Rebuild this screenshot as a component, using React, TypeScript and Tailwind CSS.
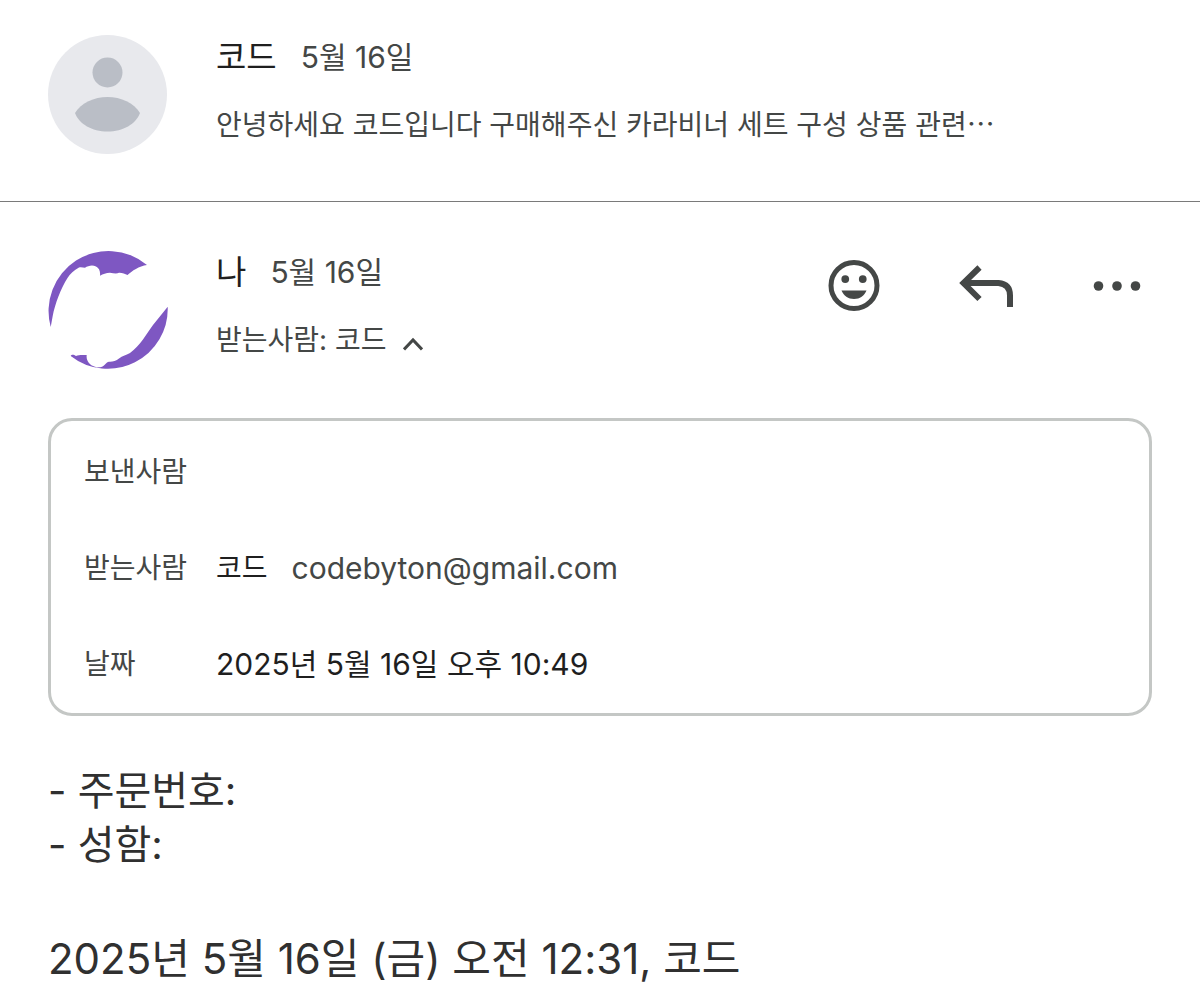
import type { ReactNode } from "react";

function PersonAvatar() {
  return (
    <svg viewBox="0 0 120 120" className="size-30 shrink-0" aria-hidden="true">
      <circle cx="59.500" cy="59.500" r="59.500" fill="#e8e9ed" />
      <circle cx="59.500" cy="37.500" r="15" fill="#babec6" />
      <path d="M27 78c6-10 19-16 32.500-16S86 68 92 78c-4 11-17 18.500-32.500 18.500S31 89 27 78z" fill="#babec6" />
    </svg>
  );
}

function MyAvatar() {
  return (
    <svg viewBox="0 0 120 120" className="size-30 shrink-0" fill="#7e57c2" aria-hidden="true">
      <path d="M2.700 77A60 60 0 0 1 99 15C91 16 84 21 79.500 25 77 24 74 22.500 71 22.700 69 24 66 23.500 62 22.700 58 23 55 24 52 25.700 52.500 21 51 18 48 16.500 44 14.500 40 16 37 17.700 35 17.500 33 17 31 17.500 26 20 22 24 19.500 28 13 38 7 54 4.700 66z" />
      <path d="M119.700 56.700A60 60 0 0 1 22.700 106C24 104 26 105 28 106 31 104.500 35 105 38.700 105 38 110 41 115 47 116.700 49 117.500 52 117.500 54 116.700 57 115.500 58 112 61 111.700 64 112 68 111 71 108.500 74 106 79 105 82 103 92 96 99 83 105 75z" />
    </svg>
  );
}

function SmileIcon() {
  return (
    <svg viewBox="0 0 24 24" className="size-15" fill="#444746" aria-hidden="true">
      <circle cx="12" cy="11.800" r="9.200" fill="none" stroke="#444746" strokeWidth="2" />
      <circle cx="8.500" cy="9.200" r="1.550" />
      <circle cx="15.500" cy="9.200" r="1.550" />
      <path d="M7 13.800h10c-.8 2.100-2.700 3.400-5 3.400s-4.200-1.300-5-3.400z" />
    </svg>
  );
}

function ReplyIcon() {
  return (
    <svg viewBox="0 0 60 60" className="size-15" fill="none" stroke="#444746" strokeWidth="6" aria-hidden="true">
      <path d="M23.500 11.500 7.500 27l16 16M8 27h34.500Q54 28 54 39.500v11.500" />
    </svg>
  );
}

function MoreIcon() {
  return (
    <svg viewBox="0 0 60 60" className="size-15" fill="#444746" aria-hidden="true">
      <circle cx="10.500" cy="30" r="4.800" />
      <circle cx="29" cy="30" r="4.800" />
      <circle cx="47.500" cy="30" r="4.800" />
    </svg>
  );
}

function ChevronUp() {
  return (
    <svg viewBox="0 0 20 20" className="mt-2 size-5" fill="none" stroke="#444746" strokeWidth="3" aria-hidden="true">
      <path d="M1 15.500 10 6l9 9.500" />
    </svg>
  );
}

function Sender({ name, date }: { name: string; date: string }) {
  return (
    <div className="flex items-center gap-6 leading-10">
      <span className="text-[33px] text-[#1f1f1f]">{name}</span>
      <span className="text-[30px] text-[#444746]">{date}</span>
    </div>
  );
}

function DetailRow({ label, children }: { label: string; children?: ReactNode }) {
  return (
    <div className="flex h-24 items-center">
      <dt className="w-33 shrink-0 text-[#444746]">{label}</dt>
      <dd className="flex items-center gap-6 text-[#1f1f1f]">{children}</dd>
    </div>
  );
}

export default function App() {
  return (
    <main className="bg-white font-['Inter','Noto_Sans_CJK_KR',sans-serif] text-[28px] leading-10 text-[#444746]">
      {/* Collapsed message */}
      <article className="flex gap-12 border-b border-[#7a7a7a] px-12 pt-[35px] pb-[46px]">
        <PersonAvatar />
        <div className="min-w-0 pt-0.5">
          <Sender name="코드" date="5월 16일" />
          <p className="mt-7 truncate">안녕하세요 코드입니다 구매해주신 카라비너 세트 구성 상품 관련⋯</p>
        </div>
      </article>

      {/* Open message */}
      <article className="px-12 pt-12">
        <header className="flex gap-12">
          <MyAvatar />
          <div className="flex-1 pt-0.5">
            <Sender name="나" date="5월 16일" />
            <button type="button" aria-expanded="true" className="mt-7 flex items-center gap-4">
              받는사람: 코드
              <ChevronUp />
            </button>
          </div>
          <div className="flex gap-18 pt-[6px] pr-1">
            <button type="button" aria-label="반응 추가" className="size-15">
              <SmileIcon />
            </button>
            <button type="button" aria-label="답장" className="size-15">
              <ReplyIcon />
            </button>
            <button type="button" aria-label="더보기" className="size-15">
              <MoreIcon />
            </button>
          </div>
        </header>

        <dl className="mt-12 rounded-3xl border-3 border-[#c4c7c5] px-[33px] pt-[3px] pb-px">
          <DetailRow label="보낸사람" />
          <DetailRow label="받는사람">
            <span>코드</span>
            <a href="mailto:codebyton@gmail.com" className="text-[30px] text-[#444746]">
              codebyton@gmail.com
            </a>
          </DetailRow>
          <DetailRow label="날짜">
            <time dateTime="2025-05-16T22:49" className="text-[30px]">
              2025년 5월 16일 오후 10:49
            </time>
          </DetailRow>
        </dl>

        <div className="pt-12 text-[40px] leading-[54px] text-[#303030]">
          <p>- 주문번호:</p>
          <p>- 성함:</p>
          <p className="mt-15 text-[42px]">2025년 5월 16일 (금) 오전 12:31, 코드</p>
        </div>
      </article>
    </main>
  );
}
